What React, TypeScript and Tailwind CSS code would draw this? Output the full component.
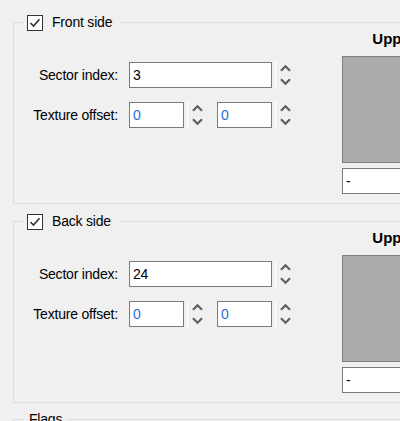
import React from "react";

function Check() {
  return (
    <span className="flex h-[16px] w-[16px] items-center justify-center border border-[#333333] bg-white">
      <svg width="14" height="14" viewBox="0 0 14 14" fill="none">
        <path d="M2.5 7 L5.5 10 L11.5 3.2" stroke="#333333" strokeWidth="1.6" />
      </svg>
    </span>
  );
}

function Spinner() {
  return (
    <div className="flex h-[30px] w-[33px] shrink-0">
      <div className="ml-[3px] w-px bg-white" />
      <svg className="ml-[4px]" width="11" height="30" viewBox="0 0 11 30" fill="none">
        <path d="M1 10.8 L5.5 6.3 L10 10.8" stroke="#5f5f5f" strokeWidth="2.2" />
        <path d="M1 19.2 L5.5 23.7 L10 19.2" stroke="#5f5f5f" strokeWidth="2.2" />
      </svg>
    </div>
  );
}

function Field({ value, width, blue }: { value: string; width: string; blue?: boolean }) {
  return (
    <div
      className={`flex h-[26px] shrink-0 items-center border border-[#7a7a7a] bg-white pl-[3px] ${width} ${
        blue ? "text-[#1f6fd8]" : "text-black"
      }`}
    >
      {value}
    </div>
  );
}

function SideGroup({ title, sector }: { title: string; sector: string }) {
  return (
    <div className="relative flex h-[182px] w-[520px] shrink-0 border-b border-l border-t border-[#dcdcdc]">
      <div className="absolute left-[9px] top-[-9px] flex h-[17px] items-center bg-[#f0f0f0] pl-[4px] pr-[9px]">
        <Check />
        <span className="ml-[9px]">{title}</span>
      </div>

      <div className="flex w-[328px] shrink-0 flex-col gap-[10px] pt-[37px]">
        <div className="flex h-[30px] items-center">
          <span className="w-[104px] text-right">Sector index:</span>
          <div className="ml-[11px] flex items-center">
            <Field value={sector} width="w-[143px]" />
            <Spinner />
          </div>
        </div>
        <div className="flex h-[30px] items-center">
          <span className="w-[104px] text-right">Texture offset:</span>
          <div className="ml-[11px] flex items-center">
            <Field value="0" width="w-[55px]" blue />
            <Spinner />
            <Field value="0" width="w-[55px]" blue />
            <Spinner />
          </div>
        </div>
      </div>

      <div className="flex w-[104px] shrink-0 flex-col pt-[7px]">
        <span className="text-center text-[15px] font-bold leading-[17px] tracking-normal">Upper</span>
        <div className="mt-[9px] h-[107px] border border-[#7f7f7f] bg-[#ababab]" />
        <div className="mt-[5px] flex h-[26px] items-center border border-[#7a7a7a] bg-white pl-[3px]">-</div>
      </div>
    </div>
  );
}

export default function App() {
  return (
    <div
      className="flex h-[421px] w-[400px] flex-col overflow-hidden bg-[#f0f0f0] pl-[13px] pt-[22px] text-[14px] leading-[17px] tracking-[-0.2px] text-black"
      style={{ fontFamily: '"Liberation Sans", Arial, sans-serif' }}
    >
      <SideGroup title="Front side" sector="3" />
      <div className="mt-[17px]">
        <SideGroup title="Back side" sector="24" />
      </div>
      <div className="relative mt-[16px] h-[100px] w-[520px] shrink-0 border-l border-t border-[#dcdcdc]">
        <div className="absolute left-[9px] top-[-9px] flex h-[17px] items-center bg-[#f0f0f0] px-[6px]">
          Flags
        </div>
      </div>
    </div>
  );
}
